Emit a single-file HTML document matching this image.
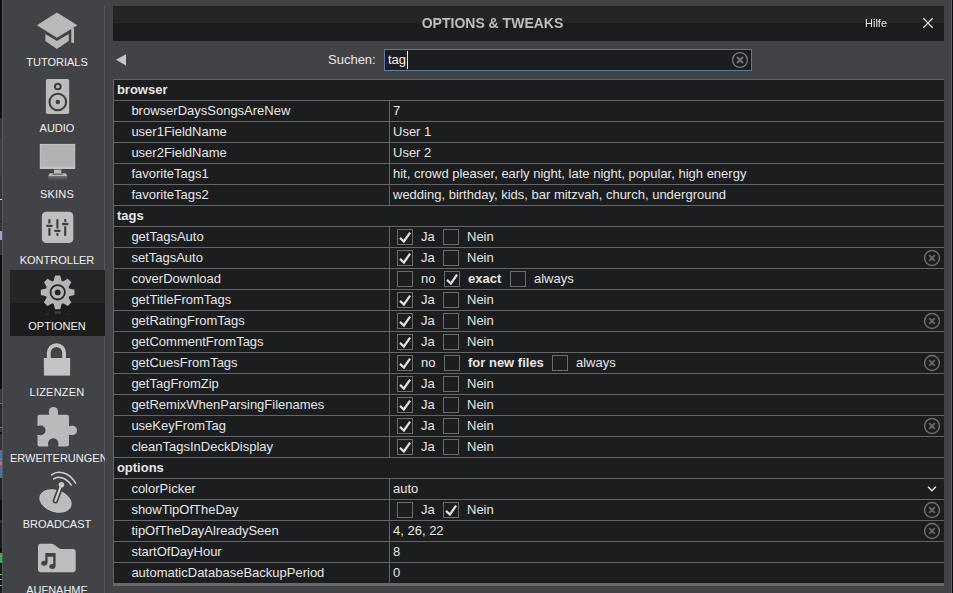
<!DOCTYPE html>
<html lang="de">
<head>
<meta charset="utf-8">
<title>Options &amp; Tweaks</title>
<style>
*{box-sizing:border-box;margin:0;padding:0}
html,body{width:953px;height:593px;overflow:hidden;background:#424347}
body{position:relative;font-family:"Liberation Sans",Arial,sans-serif;font-size:13px;color:#e6e6e6;-webkit-font-smoothing:auto}
.abs{position:absolute}
/* left strip of app behind */
#strip{position:absolute;left:0;top:0;width:2px;height:593px;background:#0e0f11}
#strip i{position:absolute;left:0;width:2px;display:block}
#lline{position:absolute;left:2px;top:0;width:1px;height:593px;background:#58585c}
#rline{position:absolute;left:951px;top:0;width:1px;height:593px;background:#606064}
#rblack{position:absolute;left:952px;top:0;width:1px;height:593px;background:#0a0a0a}
/* sidebar */
#side{position:absolute;left:3px;top:0;width:102px;height:593px;overflow:hidden}
#sep{position:absolute;left:101px;top:6px;width:1px;height:587px;background:#56565a}
.item{position:absolute;left:7px;width:95px;height:66px}
.item.sel{background:linear-gradient(#252527 0,#252527 33px,#1c1c1c 33px,#1c1c1c 66px)}
.item svg{position:absolute;left:0;top:0;width:95px;height:66px;overflow:visible}
.item span{position:absolute;left:-20.5px;right:-19.5px;top:49px;height:14px;line-height:14px;text-align:center;font-size:11px;color:#f0f0f0;white-space:nowrap}
.item span.ov{left:0;right:auto;text-align:left}
/* title bar */
#tbar{position:absolute;left:113px;top:6px;width:831px;height:35px;background:linear-gradient(#252527 0,#252527 17px,#1c1c1c 17px,#1c1c1c 35px)}
#title{position:absolute;left:0;width:759px;top:8px;height:18px;line-height:18px;text-align:center;font-size:14px;font-weight:bold;color:#bebebe;white-space:nowrap;will-change:transform}
#hilfe{position:absolute;left:752px;top:10px;height:14px;line-height:14px;font-size:11px;color:#e4e4e4;will-change:transform}
#close{position:absolute;left:808px;top:10px;width:14px;height:14px}
/* search row */
#back{position:absolute;left:116px;top:54px;width:10px;height:12px}
#slabel{position:absolute;left:328px;top:50px;height:20px;line-height:20px;font-size:13px;color:#e6e6e6}
#sbox{position:absolute;left:384px;top:49px;width:368px;height:22px;border:1px solid #5b7aa6;background:#1c1d1f}
#sbox span{position:absolute;left:3px;top:0;height:20px;line-height:20px;color:#f0f0f0}
#caret{position:absolute;left:22px;top:1px;width:1px;height:18px;background:#f0f0f0}
/* table */
#tbl{position:absolute;left:113px;top:79px;width:831px;height:507px;background:#1c1d1f;border-left:1px solid #656569;border-bottom:3px solid #68686c}
.r{position:absolute;left:0;width:830px;height:21px;border-top:1px solid #656569}
.r .n{position:absolute;left:17.4px;top:0;height:20px;line-height:20px;white-space:nowrap}
.r.h .n{left:2.9px;font-weight:bold}
.r .d{position:absolute;left:275px;top:0;width:1px;height:20px;background:#656569}
.r .v{position:absolute;left:279px;top:0;height:20px;line-height:20px;white-space:nowrap}
.cb{position:absolute;top:2px;width:16px;height:16px;border:1px solid #6c6c70}
.cb svg{position:absolute;left:-1px;top:-1px;width:16px;height:16px}
.t{position:absolute;top:0;height:20px;line-height:20px;white-space:nowrap}
.t b{font-weight:bold}
.x{position:absolute;left:809px;top:1px;width:18px;height:18px}
.item span.w{letter-spacing:.2px}
</style>
</head>
<body>
<div id="strip"><i style="top:0px;height:118px;background:#0f1012"></i><i style="top:118px;height:20px;background:#37373b"></i><i style="top:138px;height:37px;background:#3e3e42"></i><i style="top:175px;height:24px;background:#37373b"></i><i style="top:199px;height:1px;background:#d8d8d8"></i><i style="top:200px;height:21px;background:#343438"></i><i style="top:221px;height:1px;background:#1a1a1c"></i><i style="top:222px;height:9px;background:#343438"></i><i style="top:231px;height:9px;background:#9aa6c0"></i><i style="top:240px;height:15px;background:#343438"></i><i style="top:255px;height:134px;background:#0d0d0f"></i><i style="top:389px;height:14px;background:#38383c"></i><i style="top:403px;height:1px;background:#77777a"></i><i style="top:404px;height:23px;background:#2a2a2c"></i><i style="top:427px;height:1px;background:#77777a"></i><i style="top:428px;height:4px;background:#38383c"></i><i style="top:432px;height:2px;background:#0a0a0a"></i><i style="top:434px;height:16px;background:#333336"></i><i style="top:450px;height:9px;background:#4f6f9f"></i><i style="top:459px;height:1px;background:#e06060"></i><i style="top:460px;height:2px;background:#4f6f9f"></i><i style="top:462px;height:3px;background:#d86a6a"></i><i style="top:465px;height:13px;background:#4f6f9f"></i><i style="top:478px;height:22px;background:#222224"></i><i style="top:500px;height:20px;background:#0e0e0e"></i><i style="top:520px;height:3px;background:#333336"></i><i style="top:523px;height:25px;background:#1a1a1c"></i><i style="top:548px;height:5px;background:#0a0a0a"></i><i style="top:553px;height:10px;background:#3fae4a"></i><i style="top:563px;height:2px;background:#0a0a0a"></i><i style="top:565px;height:9px;background:#1a1a1c"></i><i style="top:574px;height:1px;background:#4fd05a"></i><i style="top:575px;height:4px;background:#1a1a1c"></i><i style="top:579px;height:1px;background:#4fd05a"></i><i style="top:580px;height:5px;background:#1a1a1c"></i><i style="top:585px;height:1px;background:#4fd05a"></i><i style="top:586px;height:7px;background:#1a1a1c"></i></div>
<div id="lline"></div>
<div id="side"><div id="sep"></div>
<div class="item" style="top:6px"><svg viewBox="10 6 95 66"><path d="M56.9 12.6 L77.4 25.2 L56.9 37.8 L36.9 25.2 Z" fill="#b8b9b9"/><path d="M45.4 34 L56.9 40.9 L68.7 34 V41 L56.9 49 L45.4 41 Z" fill="#b8b9b9"/><rect x="71.3" y="28.2" width="2.7" height="14.6" fill="#b8b9b9"/></svg><span>TUTORIALS</span></div>
<div class="item" style="top:72px"><svg viewBox="10 72 95 66"><rect x="45.9" y="79" width="23.3" height="35" rx="1.8" fill="#bbbcbc"/><circle cx="57.8" cy="86.5" r="2.85" fill="none" stroke="#3c3d41" stroke-width="2"/><circle cx="57.8" cy="102" r="8.3" fill="none" stroke="#3c3d41" stroke-width="2"/><circle cx="57.8" cy="102" r="2.2" fill="#3c3d41"/></svg><span>AUDIO</span></div>
<div class="item" style="top:138px"><svg viewBox="10 138 95 66"><defs><linearGradient id="rf" x1="0" y1="0" x2="0" y2="1"><stop offset="0" stop-color="#b8b9b9" stop-opacity=".32"/><stop offset="1" stop-color="#b8b9b9" stop-opacity="0"/></linearGradient></defs><rect x="39.8" y="143.9" width="35.4" height="25.1" fill="#c2c3c3"/><rect x="40.8" y="144.9" width="33.4" height="21.6" fill="#b1b3b2"/><rect x="54" y="169.6" width="7.3" height="4" fill="#b8b9b9"/><path d="M49.6 173.2 H65.9 L67.4 176.3 H48.1 Z" fill="#b8b9b9"/><rect x="52.6" y="173.7" width="10.2" height="1.1" fill="#55565a"/><path d="M48.1 176.6 H67.4 L66.4 181 H49.1 Z" fill="url(#rf)"/></svg><span class="w">SKINS</span></div>
<div class="item" style="top:204px"><svg viewBox="10 204 95 66"><rect x="41.9" y="211.8" width="31.4" height="31.3" rx="4.2" fill="#bfbfbf"/><rect x="48.30" y="218.9" width="2.2" height="17.1" rx="1.1" fill="#3f4044"/><rect x="45.90" y="223.50" width="7" height="4.6" fill="#bfbfbf"/><rect x="46.00" y="224.65" width="6.8" height="2.3" rx="1.1" fill="#3f4044"/><rect x="56.30" y="218.9" width="2.2" height="17.1" rx="1.1" fill="#3f4044"/><rect x="53.90" y="228.50" width="7" height="4.6" fill="#bfbfbf"/><rect x="54.00" y="229.65" width="6.8" height="2.3" rx="1.1" fill="#3f4044"/><rect x="64.10" y="218.9" width="2.2" height="17.1" rx="1.1" fill="#3f4044"/><rect x="61.70" y="221.70" width="7" height="4.6" fill="#bfbfbf"/><rect x="61.80" y="222.85" width="6.8" height="2.3" rx="1.1" fill="#3f4044"/></svg><span>KONTROLLER</span></div>
<div class="item sel" style="top:270px"><svg viewBox="10 270 95 66"><path d="M69.19 288.43 L74.46 289.86 L74.46 294.94 L69.19 296.37 L68.62 297.75 L71.33 302.49 L67.74 306.08 L63.00 303.37 L61.62 303.94 L60.19 309.21 L55.11 309.21 L53.68 303.94 L52.30 303.37 L47.56 306.08 L43.97 302.49 L46.68 297.75 L46.11 296.37 L40.84 294.94 L40.84 289.86 L46.11 288.43 L46.68 287.05 L43.97 282.31 L47.56 278.72 L52.30 281.43 L53.68 280.86 L55.11 275.59 L60.19 275.59 L61.62 280.86 L63.00 281.43 L67.74 278.72 L71.33 282.31 L68.62 287.05 Z" fill="#b4b4b4"/><circle cx="57.7" cy="292.3" r="7.2" fill="none" stroke="#232325" stroke-width="1.8"/><circle cx="57.7" cy="292.4" r="2.9" fill="#232325"/><rect x="54.6" y="311.2" width="6.2" height="2.6" fill="#b4b4b4" opacity=".22"/><rect x="46" y="313.4" width="3" height="1.2" fill="#b4b4b4" opacity=".12"/><rect x="66.4" y="313.4" width="3" height="1.2" fill="#b4b4b4" opacity=".12"/></svg><span>OPTIONEN</span></div>
<div class="item" style="top:336px"><svg viewBox="10 336 95 66"><rect x="43.9" y="358" width="26.2" height="17.6" fill="#c3c3c3"/><path d="M48.8 358.5 V352.75 A7.65 7.65 0 0 1 64.1 352.75 V358.5" fill="none" stroke="#c3c3c3" stroke-width="3.8"/></svg><span class="w">LIZENZEN</span></div>
<div class="item" style="top:402px"><svg viewBox="10 402 95 66"><rect x="37.5" y="414.7" width="31.5" height="31.7" rx="2.2" fill="#b9baba"/><rect x="48.8" y="407" width="9.2" height="10" rx="4.6" fill="#b9baba"/><rect x="49.3" y="411.6" width="8.2" height="4" fill="#b9baba"/><rect x="67" y="425.7" width="10" height="9.4" rx="4.7" fill="#b9baba"/><rect x="68" y="426.2" width="4.3" height="8.4" fill="#b9baba"/><circle cx="40.6" cy="430.4" r="4.9" fill="#424347"/><rect x="36" y="426" width="4.6" height="8.8" fill="#424347"/><circle cx="53.3" cy="443.5" r="5.2" fill="#424347"/><rect x="48.4" y="443.5" width="9.8" height="4" fill="#424347"/></svg><span class="ov">ERWEITERUNGEN</span></div>
<div class="item" style="top:468px"><svg viewBox="10 468 95 66"><ellipse cx="55.5" cy="501" rx="16.2" ry="10.7" transform="rotate(18 55.5 501)" fill="#bcbcbc" stroke="#cbcbcb" stroke-width=".8"/><path d="M55.4 500.8 L60.2 488" stroke="#424347" stroke-width="5.4" stroke-linecap="round"/><path d="M55.4 500.8 L61.3 485" stroke="#d0d0d0" stroke-width="2.1" stroke-linecap="round"/><circle cx="61.4" cy="484.8" r="2.8" fill="#c8c8c8"/><path d="M51.6 474.8 C57 470.8 68 470.5 75.6 483.2" fill="none" stroke="#d2d2d2" stroke-width="1.5" stroke-linecap="round"/><path d="M53.6 479 C57.5 475.6 65.5 477 71.3 485.1" fill="none" stroke="#d2d2d2" stroke-width="1.5" stroke-linecap="round"/></svg><span>BROADCAST</span></div>
<div class="item" style="top:534px"><svg viewBox="10 534 95 66"><path d="M41 543.8 H51 Q53 543.8 54.6 545 L59 548.2 Q60.2 549 62 549 H72.7 Q75.7 549 75.7 552 V569.3 Q75.7 572.3 72.7 572.3 H41 Q38 572.3 38 569.3 V546.8 Q38 543.8 41 543.8 Z" fill="#bebebe"/><path d="M45.3 553 H55.6 V566.4 H53.2 V556.7 H47.6 V563.2 H45.3 Z" fill="#424347"/><ellipse cx="44.2" cy="563.3" rx="3" ry="2.5" fill="#424347"/><ellipse cx="52.3" cy="566.5" rx="3" ry="2.5" fill="#424347"/></svg><span>AUFNAHME</span></div>
</div>
<div id="tbar">
  <div id="title">OPTIONS &amp; TWEAKS</div>
  <div id="hilfe">Hilfe</div>
  <svg id="close" viewBox="0 0 14 14"><path d="M2.3 2.3 L11.7 11.7 M11.7 2.3 L2.3 11.7" stroke="#dcdcdc" stroke-width="1.3" fill="none"/></svg>
</div>
<svg id="back" viewBox="0 0 10 12"><path d="M0 5.8 L10 .2 V11.4 Z" fill="#c6c6c6"/></svg>
<div id="slabel">Suchen:</div>
<div id="sbox"><span>tag</span><div id="caret"></div>
  <svg class="abs" style="left:346px;top:1px;width:18px;height:18px" viewBox="0 0 18 18"><circle cx="9" cy="9" r="7.4" fill="none" stroke="#77777a" stroke-width="1.4"/><path d="M6 6 L12 12 M12 6 L6 12" stroke="#77777a" stroke-width="1.8"/></svg>
</div>
<div id="tbl">
<div class="r h" style="top:0px"><div class="n">browser</div></div>
<div class="r" style="top:21px"><div class="n">browserDaysSongsAreNew</div><div class="d"></div><div class="v">7</div></div>
<div class="r" style="top:42px"><div class="n">user1FieldName</div><div class="d"></div><div class="v">User 1</div></div>
<div class="r" style="top:63px"><div class="n">user2FieldName</div><div class="d"></div><div class="v">User 2</div></div>
<div class="r" style="top:84px"><div class="n">favoriteTags1</div><div class="d"></div><div class="v">hit, crowd pleaser, early night, late night, popular, high energy</div></div>
<div class="r" style="top:105px"><div class="n">favoriteTags2</div><div class="d"></div><div class="v">wedding, birthday, kids, bar mitzvah, church, underground</div></div>
<div class="r h" style="top:126px"><div class="n">tags</div></div>
<div class="r" style="top:147px"><div class="n">getTagsAuto</div><div class="d"></div><div class="cb" style="left:283px"><svg viewBox="0 0 16 16"><path d="M3 8.9 L6.9 12.5 L13.1 3.6" fill="none" stroke="#e0e0e0" stroke-width="2.2"/></svg></div><div class="t" style="left:307px">Ja</div><div class="cb" style="left:329px"></div><div class="t" style="left:353px">Nein</div></div>
<div class="r" style="top:168px"><div class="n">setTagsAuto</div><div class="d"></div><div class="cb" style="left:283px"><svg viewBox="0 0 16 16"><path d="M3 8.9 L6.9 12.5 L13.1 3.6" fill="none" stroke="#e0e0e0" stroke-width="2.2"/></svg></div><div class="t" style="left:307px">Ja</div><div class="cb" style="left:329px"></div><div class="t" style="left:353px">Nein</div><svg class="x" viewBox="0 0 18 18"><circle cx="9" cy="9" r="7.4" fill="none" stroke="#6c6c6f" stroke-width="1.5"/><path d="M6.2 6.2 L11.8 11.8 M11.8 6.2 L6.2 11.8" stroke="#6c6c6f" stroke-width="1.8"/></svg></div>
<div class="r" style="top:189px"><div class="n">coverDownload</div><div class="d"></div><div class="cb" style="left:283px"></div><div class="t" style="left:307px">no</div><div class="cb" style="left:330px"><svg viewBox="0 0 16 16"><path d="M3 8.9 L6.9 12.5 L13.1 3.6" fill="none" stroke="#e0e0e0" stroke-width="2.2"/></svg></div><div class="t" style="left:354px"><b>exact</b></div><div class="cb" style="left:396px"></div><div class="t" style="left:420px">always</div></div>
<div class="r" style="top:210px"><div class="n">getTitleFromTags</div><div class="d"></div><div class="cb" style="left:283px"><svg viewBox="0 0 16 16"><path d="M3 8.9 L6.9 12.5 L13.1 3.6" fill="none" stroke="#e0e0e0" stroke-width="2.2"/></svg></div><div class="t" style="left:307px">Ja</div><div class="cb" style="left:329px"></div><div class="t" style="left:353px">Nein</div></div>
<div class="r" style="top:231px"><div class="n">getRatingFromTags</div><div class="d"></div><div class="cb" style="left:283px"><svg viewBox="0 0 16 16"><path d="M3 8.9 L6.9 12.5 L13.1 3.6" fill="none" stroke="#e0e0e0" stroke-width="2.2"/></svg></div><div class="t" style="left:307px">Ja</div><div class="cb" style="left:329px"></div><div class="t" style="left:353px">Nein</div><svg class="x" viewBox="0 0 18 18"><circle cx="9" cy="9" r="7.4" fill="none" stroke="#6c6c6f" stroke-width="1.5"/><path d="M6.2 6.2 L11.8 11.8 M11.8 6.2 L6.2 11.8" stroke="#6c6c6f" stroke-width="1.8"/></svg></div>
<div class="r" style="top:252px"><div class="n">getCommentFromTags</div><div class="d"></div><div class="cb" style="left:283px"><svg viewBox="0 0 16 16"><path d="M3 8.9 L6.9 12.5 L13.1 3.6" fill="none" stroke="#e0e0e0" stroke-width="2.2"/></svg></div><div class="t" style="left:307px">Ja</div><div class="cb" style="left:329px"></div><div class="t" style="left:353px">Nein</div></div>
<div class="r" style="top:273px"><div class="n">getCuesFromTags</div><div class="d"></div><div class="cb" style="left:283px"><svg viewBox="0 0 16 16"><path d="M3 8.9 L6.9 12.5 L13.1 3.6" fill="none" stroke="#e0e0e0" stroke-width="2.2"/></svg></div><div class="t" style="left:307px">no</div><div class="cb" style="left:330px"></div><div class="t" style="left:354px"><b>for new files</b></div><div class="cb" style="left:438px"></div><div class="t" style="left:462px">always</div><svg class="x" viewBox="0 0 18 18"><circle cx="9" cy="9" r="7.4" fill="none" stroke="#6c6c6f" stroke-width="1.5"/><path d="M6.2 6.2 L11.8 11.8 M11.8 6.2 L6.2 11.8" stroke="#6c6c6f" stroke-width="1.8"/></svg></div>
<div class="r" style="top:294px"><div class="n">getTagFromZip</div><div class="d"></div><div class="cb" style="left:283px"><svg viewBox="0 0 16 16"><path d="M3 8.9 L6.9 12.5 L13.1 3.6" fill="none" stroke="#e0e0e0" stroke-width="2.2"/></svg></div><div class="t" style="left:307px">Ja</div><div class="cb" style="left:329px"></div><div class="t" style="left:353px">Nein</div></div>
<div class="r" style="top:315px"><div class="n">getRemixWhenParsingFilenames</div><div class="d"></div><div class="cb" style="left:283px"><svg viewBox="0 0 16 16"><path d="M3 8.9 L6.9 12.5 L13.1 3.6" fill="none" stroke="#e0e0e0" stroke-width="2.2"/></svg></div><div class="t" style="left:307px">Ja</div><div class="cb" style="left:329px"></div><div class="t" style="left:353px">Nein</div></div>
<div class="r" style="top:336px"><div class="n">useKeyFromTag</div><div class="d"></div><div class="cb" style="left:283px"><svg viewBox="0 0 16 16"><path d="M3 8.9 L6.9 12.5 L13.1 3.6" fill="none" stroke="#e0e0e0" stroke-width="2.2"/></svg></div><div class="t" style="left:307px">Ja</div><div class="cb" style="left:329px"></div><div class="t" style="left:353px">Nein</div><svg class="x" viewBox="0 0 18 18"><circle cx="9" cy="9" r="7.4" fill="none" stroke="#6c6c6f" stroke-width="1.5"/><path d="M6.2 6.2 L11.8 11.8 M11.8 6.2 L6.2 11.8" stroke="#6c6c6f" stroke-width="1.8"/></svg></div>
<div class="r" style="top:357px"><div class="n">cleanTagsInDeckDisplay</div><div class="d"></div><div class="cb" style="left:283px"><svg viewBox="0 0 16 16"><path d="M3 8.9 L6.9 12.5 L13.1 3.6" fill="none" stroke="#e0e0e0" stroke-width="2.2"/></svg></div><div class="t" style="left:307px">Ja</div><div class="cb" style="left:329px"></div><div class="t" style="left:353px">Nein</div></div>
<div class="r h" style="top:378px"><div class="n">options</div></div>
<div class="r" style="top:399px"><div class="n">colorPicker</div><div class="d"></div><div class="v">auto</div><svg class="abs" style="left:813px;top:6px;width:10px;height:8px" viewBox="0 0 10 8"><path d="M1 1.7 L4.9 5.7 L8.9 1.7" fill="none" stroke="#e8e8e8" stroke-width="1.4"/></svg></div>
<div class="r" style="top:420px"><div class="n">showTipOfTheDay</div><div class="d"></div><div class="cb" style="left:283px"></div><div class="t" style="left:307px">Ja</div><div class="cb" style="left:329px"><svg viewBox="0 0 16 16"><path d="M3 8.9 L6.9 12.5 L13.1 3.6" fill="none" stroke="#e0e0e0" stroke-width="2.2"/></svg></div><div class="t" style="left:353px">Nein</div><svg class="x" viewBox="0 0 18 18"><circle cx="9" cy="9" r="7.4" fill="none" stroke="#6c6c6f" stroke-width="1.5"/><path d="M6.2 6.2 L11.8 11.8 M11.8 6.2 L6.2 11.8" stroke="#6c6c6f" stroke-width="1.8"/></svg></div>
<div class="r" style="top:441px"><div class="n">tipOfTheDayAlreadySeen</div><div class="d"></div><div class="v">4, 26, 22</div><svg class="x" viewBox="0 0 18 18"><circle cx="9" cy="9" r="7.4" fill="none" stroke="#6c6c6f" stroke-width="1.5"/><path d="M6.2 6.2 L11.8 11.8 M11.8 6.2 L6.2 11.8" stroke="#6c6c6f" stroke-width="1.8"/></svg></div>
<div class="r" style="top:462px"><div class="n">startOfDayHour</div><div class="d"></div><div class="v">8</div></div>
<div class="r" style="top:483px"><div class="n">automaticDatabaseBackupPeriod</div><div class="d"></div><div class="v">0</div></div>
</div>
<div id="rline"></div>
<div id="rblack"></div>
</body>
</html>
